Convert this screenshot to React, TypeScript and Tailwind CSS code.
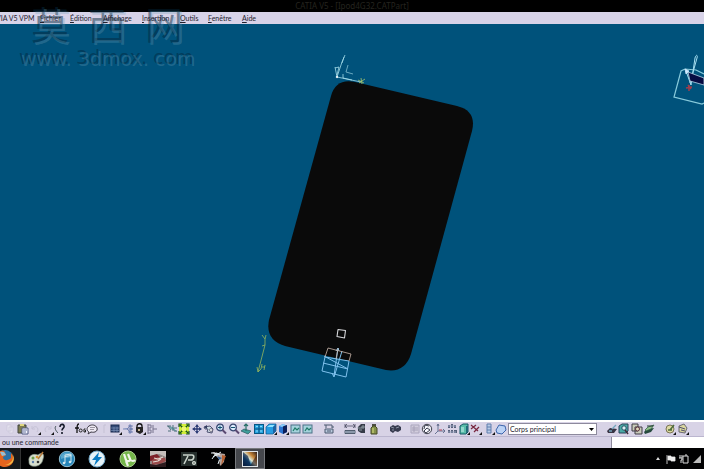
import type { ReactNode } from "react";

const menus = [
  { key: "F", rest: "ichier", width: "w-[30px]" },
  { key: "É", rest: "dition", width: "w-[33px]" },
  { key: "A", rest: "ffichage", width: "w-[39px]" },
  { key: "I", rest: "nsertion", width: "w-[38px]" },
  { key: "O", rest: "utils", width: "w-[28px]" },
  { key: "F", rest: "enêtre", width: "w-[34px]" },
  { key: "A", rest: "ide", width: "w-[30px]" },
];

const corner = <path d="M9 12h3V9z" fill="#111" />;

const magnifier = (
  <>
    <circle cx="5" cy="4.5" r="3.3" fill="#dcecff" stroke="#36456f" strokeWidth="1.3" />
    <path d="M7.5 7l3.5 3.5" stroke="#5b4a72" strokeWidth="2" />
  </>
);

const window_ = (
  <>
    <rect x="1" y="2" width="9" height="8" fill="#a5d2dc" stroke="#4b7387" />
    <path d="M3 8l2-3 2 2 2-2" stroke="#207b68" strokeWidth="1.2" fill="none" />
  </>
);

const icons: Record<string, ReactNode> = {
  Copier: <path d="M3 2h4v6H3zM5 4h4v6H5z" stroke="#cbc7da" fill="#e4e1ef" strokeWidth=".7" />,
  Coller: (
    <>
      <path d="M1 2h8v8H1z" fill="#7e7d52" stroke="#41443f" />
      <path d="M3 1h4v2H3z" fill="#ded681" />
      <path d="M5 5h6v6H5z" fill="#f4f4ff" stroke="#505a83" />
      <path d="M6 7h4M6 9h3" stroke="#6b78a0" />
    </>
  ),
  Annuler: <><path d="M3 3v3h3M3 6c3-5 8-1 5 3" stroke="#c6c2d6" fill="none" />{corner}</>,
  Rétablir: <><path d="M9 3v3H6M9 6C6 1 1 5 4 9" stroke="#c6c2d6" fill="none" />{corner}</>,
  Aide: (
    <>
      <path d="M2 3c-2 2 0 5 2 7" stroke="#3e4a50" fill="none" />
      <path d="M6 4c0-4 5-3 4 0-.5 1.5-2 1.5-2 3.500M8 9v2" stroke="#151a29" strokeWidth="1.6" fill="none" />
    </>
  ),
  Formule: (
    <>
      <path d="M5 1C3 1 3 3 3 10M1 5h4" stroke="#111" strokeWidth="1.3" fill="none" />
      <circle cx="6.700" cy="7.500" r="1.500" stroke="#222" fill="none" />
      <path d="M11.500 6H10v3h1.500V7" stroke="#222" fill="none" />
    </>
  ),
  Commentaire: (
    <>
      <path d="M3 9l-1 2 3-2c4 1 7-1 6-4S6 1 3 3 1 8 3 9z" fill="#eee9f3" stroke="#37343f" />
      <path d="M4 4.500h5M4 6.500h4" stroke="#74707b" strokeWidth=".7" />
    </>
  ),
  Vérifier: <path d="M6 2v8M8 2H6" stroke="#c5c1d4" fill="none" />,
  Table: (
    <>
      <rect x="1" y="2" width="8" height="7" fill="#344b78" stroke="#192a4e" />
      <path d="M1 5h8M1 7.500h8M4 4v5M7 4v5" stroke="#8096b9" strokeWidth=".6" />
      {corner}
    </>
  ),
  Arbre: (
    <path d="M1 6h4l3-3h3M5 6h6M5 6l3 3h3M7 2h2v2H7zM8 5h2v2H8zM7 8h2v2H7z" stroke="#6b7aab" strokeWidth=".8" fill="#9eadd4" />
  ),
  Verrou: (
    <>
      <path d="M3 5V3c0-3 5-3 5 0v2" stroke="#111" strokeWidth="1.300" fill="none" />
      <path d="M2 4h7v5l-3 2-4-2z" fill="#252323" />
      <path d="M4 6h2v2H4z" fill="#c6b693" />
      {corner}
    </>
  ),
  Structure: (
    <path d="M2 1v10M2 2h3v3H2M2 7h3v3H2M7 2v8M7 6h4" stroke="#77738d" fill="none" />
  ),
  Survol: (
    <>
      <path d="M2 3l5 1 4 5-6-3z" fill="#6fa3aa" />
      <path d="M1 3h4M2 3l3 4M2 8h3M7 2v6M8 5h3M8 8h3" stroke="#42656f" strokeWidth=".9" fill="none" />
    </>
  ),
  "Tout centrer": (
    <>
      <rect x="1" y="1" width="10" height="10" fill="#d0ee38" />
      <path d="M1 4V1h3M8 1h3v3M11 8v3H8M4 11H1V8M2 2l8 8M10 2l-8 8" stroke="#15511d" strokeWidth="1.200" fill="none" />
      <path d="M4 4h4v4H4z" fill="#edf574" />
    </>
  ),
  Translation: (
    <>
      <path d="M6 2v8M2 6h8" stroke="#2c3b74" strokeWidth="1.300" />
      <path d="M6 1l2 3H4zM6 11l2-3H4zM1 6l3-2v4zM11 6L8 4v4z" fill="#2c3b74" />
    </>
  ),
  Rotation: (
    <>
      <path d="M1 4l6-1 3 3-1 4-5-1 1-3H2z" fill="#cbd9e4" stroke="#4f5272" />
      <path d="M1 4l3-2v4z" fill="#333c62" />
      <circle cx="8" cy="7" r="1.500" fill="#fff" stroke="#585265" strokeWidth=".7" />
    </>
  ),
  "Zoom avant": <>{magnifier}<path d="M3 4.500h4M5 2.500v4" stroke="#13516d" /></>,
  "Zoom arrière": <>{magnifier}<path d="M3 4.500h4" stroke="#13516d" /></>,
  "Vue normale": (
    <>
      <path d="M1 8l3-2 7 2-3 3z" fill="#3e9d9a" stroke="#28575f" strokeWidth=".7" />
      <path d="M6 1v7M4 3l2-2 2 2" stroke="#286f68" strokeWidth="1.200" fill="none" />
    </>
  ),
  "Vues multiples": (
    <>
      <rect x="1.500" y="1.500" width="9" height="9" fill="#26a4e2" stroke="#075884" />
      <path d="M6 2v8M2 6h8" stroke="#064f7c" />
      <path d="M3 3.500h2M7 3.500h2M3 8h2M7 8h2" stroke="#8ddbf6" />
    </>
  ),
  "Vue isométrique": (
    <>
      <path d="M1 4l3-3h7v7l-3 3H1z" fill="#269ce2" stroke="#0e5c91" strokeWidth=".7" />
      <path d="M2 4l3-2h5L8 4z" fill="#8fe3ff" />
      <path d="M8 4l3-3v7l-3 3z" fill="#1d63a4" />
      {corner}
    </>
  ),
  Ombrage: (
    <>
      <path d="M2 3l4-2 4 2v6l-4 2-4-2z" fill="#2b73d0" />
      <path d="M6 3l4-1v7l-4 2z" fill="#0b1e5a" />
      <path d="M2 3l4-2 3 1-4 2z" fill="#8cccf8" />
      {corner}
    </>
  ),
  "Cacher/Afficher": window_,
  "Espace visible": window_,
  Imprimer: (
    <>
      <path d="M2 6h8v4H2z" fill="#b9c8dc" stroke="#4d5a70" />
      <path d="M3 5V2h6v3M4 8h4M1 2h2M9 4h2" stroke="#4d5a70" fill="none" />
    </>
  ),
  "Mesurer entre": (
    <>
      <path d="M1 1v4M11 1v4M1 3h10M3 1L1 3l2 2M9 1l2 2-2 2" stroke="#4b4d62" strokeWidth=".8" fill="none" />
      <path d="M1 7.500h10v3H1z" fill="#bbc8da" stroke="#334152" strokeWidth=".8" />
      <path d="M3 8v2M5 8v2M7 8v2M9 8v2" stroke="#334152" strokeWidth=".7" />
    </>
  ),
  "Mesurer un élément": (
    <>
      <path d="M2 4l3-3h4v9H5L2 8z" fill="#353b48" />
      <path d="M1 5h5M3 7h3M6 3h2v2H6z" stroke="#a1adb5" strokeWidth=".8" fill="none" />
    </>
  ),
  "Mesurer l'inertie": (
    <>
      <path d="M4 1h4v3H4z" fill="#4c4e44" />
      <path d="M3 5l2-2h2l2 2v6H3z" fill="#83904b" stroke="#464b26" />
      <path d="M5 5v5" stroke="#dbe081" />
    </>
  ),
  Catalogue: (
    <>
      <path d="M1 4l3-2 2 1 3-1 3 2v3l-3 2-3-1-2 2-3-2z" fill="#373b4f" />
      <path d="M2 4l3 1M7 5l3-1M4 6v2" stroke="#b0b7c8" strokeWidth=".7" />
    </>
  ),
  Sélection: <><path d="M2 2h8v8H2z" fill="#d1ccdc" stroke="#aaa6bd" /><path d="M3 5h6M3 7h6M5 3v6" stroke="#a6a1b8" /></>,
  "Mise à jour": (
    <>
      <circle cx="6" cy="6" r="4.700" fill="#ecebf2" stroke="#40424e" />
      <path d="M3 6l1-4 4 1M6 5l3 2-4 3-2-2z" stroke="#3c4050" fill="#f9f9ff" />
    </>
  ),
  Repère: (
    <>
      <path d="M4 1v7l-3 3M4 8h7M3 3l1-2 1 2M9 6l2 2-2 2" stroke="#5e698a" strokeWidth=".9" fill="none" />
      <path d="M5 7h3" stroke="#bb4352" />
    </>
  ),
  Grille: (
    <>
      <path d="M2 2h2v3H2zM5 1h2v4H5zM8 2h2v3H8zM2 7h2v3H2zM5 7h2v3H5zM8 7h3v3H8z" fill="#56607b" />
      <path d="M2 3h8M2 9h8" stroke="#9aa5bf" />
    </>
  ),
  Volume: (
    <>
      <path d="M2 3l3-2h5v8l-2 2H2z" fill="#59bda9" stroke="#155765" />
      <path d="M8 3h2v6l-2 2z" fill="#226b79" />
      <path d="M3 4h3v5H3z" fill="#93d8cc" />
      {corner}
    </>
  ),
  Contrainte: <><path d="M1 2l7 6M1 6l5-4M4 9l5-5" stroke="#79273f" strokeWidth="1.200" />{corner}</>,
  Analyse: <><path d="M4 1h4v9H4zM4 4h4M4 7h4" stroke="#607eae" fill="#b9cbe7" />{corner}</>,
  Surface: <path d="M1 7l3-5 6 1 1 4-4 4-5-1z" fill="#bbd2f5" stroke="#3c65ac" />,
  Esquisse: (
    <>
      <path d="M1 8l3-3 7 1-3 4H2z" fill="#383444" />
      <path d="M6 6l4-4M3 8h3" stroke="#73a4bc" strokeWidth="1.300" />
    </>
  ),
  Recherche: (
    <>
      <path d="M1 10V3l3-2h6v7l-2 2z" fill="#4aaba5" stroke="#29435b" />
      <circle cx="6" cy="5" r="2.200" fill="#daeff1" stroke="#234d66" />
      <path d="M7 7l3 4" stroke="#402d3b" strokeWidth="1.500" />
    </>
  ),
  Dupliquer: (
    <>
      <path d="M1 1h6v7H1zM4 4h7v7H4z" fill="#c8cab9" stroke="#3e3c46" />
      <circle cx="6.500" cy="6" r="2" fill="#ded9bb" stroke="#5d3340" />
    </>
  ),
  Calques: (
    <>
      <path d="M1 9l3-3 7-1-3 4-6 2z" fill="#25493e" />
      <path d="M2 7l3-3 6-2-3 4-5 2z" fill="#8fbf88" stroke="#28543c" strokeWidth=".7" />
      <path d="M4 3h6" stroke="#283d37" />
    </>
  ),
  Matériau: (
    <>
      <circle cx="6" cy="6" r="4" fill="#ded9a4" stroke="#787453" />
      <path d="M6 7l4-5M4 7h4" stroke="#4d6c3a" strokeWidth="1.500" />
      {corner}
    </>
  ),
  Rendu: (
    <>
      <path d="M2 3l5-2 3 4-2 5-6-1z" fill="#d9d69e" stroke="#6b6a74" />
      <path d="M2 4l6 2M4 7l4 1" stroke="#52506a" />
      {corner}
    </>
  ),
};

const groups = [
  { names: ["Copier", "Coller", "Annuler", "Rétablir", "Aide"], className: "ml-1 w-[62px]" },
  { names: ["Formule", "Commentaire", "Vérifier", "Table", "Arbre", "Verrou", "Structure"], className: "ml-2 w-[84px]" },
  {
    names: ["Survol", "Tout centrer", "Translation", "Rotation", "Zoom avant", "Zoom arrière", "Vue normale", "Vues multiples", "Vue isométrique", "Ombrage", "Cacher/Afficher", "Espace visible"],
    className: "ml-2 w-[148px]",
  },
  { names: ["Imprimer"], className: "ml-[9px] w-3" },
  { names: ["Mesurer entre", "Mesurer un élément", "Mesurer l'inertie"], className: "ml-[9px] w-9" },
  { names: ["Catalogue"], className: "ml-[9px] w-3" },
  { names: ["Sélection", "Mise à jour", "Repère", "Grille", "Volume", "Contrainte", "Analyse", "Surface"], className: "ml-2 w-[98px]" },
];

const endGroups = [
  { names: ["Esquisse", "Recherche", "Dupliquer", "Calques"], className: "ml-[9px] w-[49px]" },
  { names: ["Matériau", "Rendu"], className: "ml-[9px] w-[25px]" },
];

function ToolGroup({ names, className }: { names: string[]; className: string }) {
  return (
    <div className={`flex shrink-0 justify-between ${className}`}>
      {names.map((name) => (
        <button key={name} aria-label={name} className="size-3 shrink-0">
          <svg viewBox="0 0 12 12" className="size-3">{icons[name]}</svg>
        </button>
      ))}
    </div>
  );
}

const apps: { name: string; art: ReactNode }[] = [
  {
    name: "Paint",
    art: (
      <>
        <path d="M2 11C1 6 6 3 11 5c4-3 7-1 5 4-1 6-6 8-11 7-3-1-3-3-3-5z" fill="#d7ddcc" stroke="#819085" strokeWidth=".7" />
        <circle cx="6" cy="8" r="1.500" fill="#6a9e4b" /><circle cx="10" cy="7" r="1.300" fill="#d69b36" />
        <circle cx="6" cy="12" r="1.200" fill="#597ba9" /><circle cx="11" cy="12" r="1.300" fill="#333" />
        <path d="M11 9l5-7" stroke="#b7793c" strokeWidth="1.500" />
      </>
    ),
  },
  {
    name: "iTunes",
    art: (
      <>
        <circle cx="9" cy="9" r="7.700" fill="#2685b9" stroke="#91bfd3" />
        <path d="M3 6a7 7 0 0112 0c-4 3-8 1-12 3z" fill="#79c0dc" opacity=".6" />
        <path d="M7 13V5l6-1v8M7 6.500l6-1" stroke="#d2e8f0" strokeWidth="1" fill="none" />
        <circle cx="6" cy="13" r="1.300" fill="#d2e8f0" /><circle cx="12" cy="12" r="1.300" fill="#d2e8f0" />
      </>
    ),
  },
  {
    name: "DAEMON Tools",
    art: (
      <>
        <circle cx="9" cy="9" r="8" fill="#e5f2f8" stroke="#6ca5c7" />
        <path d="M11 2L4 10h4l-2 6 8-9h-4z" fill="#087ac3" />
      </>
    ),
  },
  {
    name: "µTorrent",
    art: (
      <>
        <circle cx="9" cy="9" r="8" fill="#75b64a" stroke="#aacb8e" />
        <path d="M5 4l2 6c1 2 5 1 4-1L9 4M11 9c1 3 4 2 5 1M7 11l2 5" stroke="#f1f5e9" strokeWidth="2.200" fill="none" />
      </>
    ),
  },
  {
    name: "Jeu",
    art: (
      <>
        <rect x="1" y="1" width="16" height="16" fill="#8f8583" />
        <path d="M1 1h16v6l-7-3-9 2z" fill="#c5bebb" />
        <path d="M1 6l7-2 3 3-4 3-6 1z" fill="#7d2129" />
        <path d="M3 10l6-3 7 1 1 3-6 3-8 1z" fill="#9a4a4a" />
        <path d="M5 8l4 1 5-2M4 12l5-1 3-2" stroke="#e3d9d2" strokeWidth="1.200" fill="none" />
        <path d="M1 14l6 1 10-3v5H1z" fill="#2c1a1d" />
      </>
    ),
  },
  {
    name: "Éditeur",
    art: (
      <>
        <rect x="1" y="2" width="16" height="14" fill="#252e2c" />
        <path d="M3 5h9c3 0 2 5-1 5H8M8 6l-4 8" stroke="#c9d2ca" strokeWidth="1.600" fill="none" />
        <circle cx="14" cy="13" r="2" fill="#dde4dc" /><circle cx="14" cy="13" r=".7" fill="#27332d" />
      </>
    ),
  },
  {
    name: "Modeleur",
    art: (
      <>
        <path d="M2 2l13 2-1 8-4 4-1-7z" fill="#b4a39c" />
        <path d="M12 5l4 1-5 10 1-6z" fill="#b96131" />
        <path d="M1 3h4l3 4M2 9l4-6 4 2M3 7l8-5M10 8l-2 6" stroke="#e1edf2" strokeWidth="1" fill="none" />
        <path d="M7 6l5 2-3 2z" fill="#355d91" />
      </>
    ),
  },
  {
    name: "CATIA V5",
    art: (
      <>
        <defs>
          <linearGradient id="catia" x1="0" y1="1" x2="1" y2="0">
            <stop stopColor="#090f28" /><stop offset=".35" stopColor="#176ba0" />
            <stop offset=".5" stopColor="#d9e2d0" /><stop offset=".68" stopColor="#c58335" /><stop offset="1" stopColor="#170e15" />
          </linearGradient>
        </defs>
        <rect x="1.500" y="1.500" width="15" height="15" fill="url(#catia)" stroke="#dfe4e7" />
        <path d="M2 2l5 4 3 10H2z" fill="#07183c" opacity=".65" />
        <path d="M9 16l7-12v12z" fill="#291612" opacity=".6" />
      </>
    ),
  },
];

function Scene() {
  return (
    <svg viewBox="0 24 704 396" className="block w-full" role="img" aria-label="Modèle 3D">
      <path d="M331 96Q336 78 355 82L457 106Q477 111 472 131L411 354Q405 373 386 370L285 346Q265 340 269 320Z" fill="#0a0a0a" />
      <g fill="none" strokeWidth=".8">
        <path d="M337 77l5-15 3-7M342 63l2-6M335 67l2 10 24 5M335 68l4-1-2 8M343 74v4l9 2" stroke="#a4ddea" />
        <path d="M348 65l-2 7 7 2" stroke="#82becf" />
        <path d="M358 80l6 3M359 83l6-4M361 78l1 6" stroke="#a8c66c" />
        <circle cx="337" cy="77" r=".8" fill="#fff" stroke="#fff" />
        <path d="M338 329.500l7.500 1-1 7.500-7.500-1.500z" stroke="#d8d9dc" strokeWidth="1.100" strokeLinejoin="round" />
        <path d="M262 335l3 4 1-4M265 339v6l-7 27M262 346l3-1M257 367l1 5 3-3M261 369l1-5M262 367h3M264 370l1-5" stroke="#94b65d" />
        <g stroke="#7fc1ed" strokeWidth="1">
          <path d="M325 357l-3 14 24 6 3-16M324 356l24 13M323 363l25 6M325 357l24 4M338 348l-4 28M342 351l-7 23" />
          <path d="M336 351l2-3 1 3M332 373l2 4 1-4" />
        </g>
        <path d="M325 357l3-9 23 6-2 7M338 348l-2 11" stroke="#cbb8ac" />
        <path d="M704 74l-8-4-11-1-4 2-7 26 28 7 2-1" stroke="#88cbdc" strokeWidth="1.200" />
        <path d="M686 71l5 14 4-27c1-4 3-3 2 0l-7 25" stroke="#a6dff1" strokeWidth="1" />
        <path d="M688 72l16 6v7l-14-4z" fill="#070b42" stroke="#b7d7e7" />
        <path d="M685 69l4 2-3 3z" fill="#d0eaff" stroke="#d0eaff" />
        <path d="M689 85v6M686 88l6-1M688 85l3 4" stroke="#9e3e4d" strokeWidth="1.500" />
      </g>
    </svg>
  );
}

export default function App() {
  return (
    <div className="relative w-full bg-black font-[Lato,sans-serif] text-[7px] leading-3 text-[#24212d]">
      <header>
        <h1 className="h-3 text-center font-['Noto_Sans',sans-serif] text-[8px] leading-3 text-[#25241f]">CATIA V5 - [Ipod4G32.CATPart]</h1>
        <nav className="flex h-3 bg-[#d8d3e8] whitespace-nowrap">
          <button className="relative z-10 -ml-1 w-11 text-left">VIA V5 VPM</button>
          {menus.map(({ key, rest, width }) => (
            <button key={key + rest} className={`relative z-10 text-left ${width}`}>
              <span className="underline">{key}</span>{rest}
            </button>
          ))}
        </nav>
      </header>

      <main className="bg-[#00527b]"><Scene /></main>

      <div className="pointer-events-none absolute top-[2px] left-5 text-transparent [text-shadow:1px_1px_0_#6fa0b84d,-1px_-1px_0_#04283f80]">
        <div className="flex gap-[19px] pl-3 font-['Noto_Sans_CJK_SC',sans-serif] text-[38px] leading-[44px]">
          <span>莫</span><span>西</span><span>网</span>
        </div>
        <div className="font-['DejaVu_Sans',sans-serif] text-[19px] leading-6">www. 3dmox. com</div>
      </div>

      <footer>
        <div className="flex h-4 items-center border-t-2 border-white bg-[#d8d3e6]">
          {groups.map((group) => <ToolGroup key={group.names[0]} {...group} />)}
          <div className="relative ml-px w-[89px] shrink-0">
            <select aria-label="Corps actif" className="block h-3 w-full appearance-none border border-[#8d8a9d] bg-white px-px text-[7px] leading-[10px]">
              <option>Corps principal</option>
            </select>
            <svg viewBox="0 0 5 3" className="pointer-events-none absolute top-[5px] right-[3px] h-[3px] w-[5px]"><path d="M0 0h5L2.500 3z" /></svg>
          </div>
          {endGroups.map((group) => <ToolGroup key={group.names[0]} {...group} />)}
        </div>
        <div className="flex h-3 border-t border-[#bbb6cf] bg-[#d5d0e5]">
          <p className="flex-1 pl-[2px] leading-[11px]">ou une commande</p>
          <input aria-label="Commande" className="w-[93px] border-l border-[#8d8a9d] bg-white px-1 outline-none" />
        </div>
        <div className="flex h-[21px] items-center bg-[#010102]">
          <button aria-label="Firefox" className="h-full w-[21px] border-r border-[#333] bg-[#17191b]">
            <svg viewBox="0 0 20 21" className="h-[21px] w-5">
              <circle cx="5" cy="10" r="8" fill="#2a70a5" />
              <path d="M0 3c5-2 5 2 6 4l-3 2c0 4 5 4 8 1V5c6 7 1 14-6 14-3 0-5-1-7-3v-6z" fill="#e5641d" />
              <path d="M12 5c3 6-1 11-7 12 8 1 11-6 7-12z" fill="#f3bf48" />
              <path d="M0 4c3-1 5 0 6 3l-4 1z" fill="#95bfd5" />
            </svg>
          </button>
          <div className="grid h-full w-[244px] grid-cols-8">
            {apps.map(({ name, art }) => (
              <button key={name} aria-label={name} className={`flex items-center justify-center ${name === "CATIA V5" ? "border border-[#77797d] bg-[#45474c]" : ""}`}>
                <svg viewBox="0 0 18 18" className="size-[18px]">{art}</svg>
              </button>
            ))}
          </div>
          <div className="ml-auto flex items-center gap-[3px] pr-[2px]">
            <button aria-label="Icônes cachées"><svg viewBox="0 0 10 10" className="size-[10px]"><path d="M3 6l2-3 2 3z" fill="#ddd" /></svg></button>
            <button aria-label="Notifications"><svg viewBox="0 0 10 10" className="size-[10px]"><path d="M1 1v9M2 2h3v1h4v4H5V6H2z" fill="#eee" stroke="#eee" strokeWidth=".8" /></svg></button>
            <button aria-label="Batterie"><svg viewBox="0 0 10 10" className="size-[10px]"><path d="M4 2h5v7H4zM6 1h2M1 1v3M3 1v3M0 4h3v2H2v3" fill="none" stroke="#ddd" /></svg></button>
            <button aria-label="Réseau"><svg viewBox="0 0 10 10" className="size-[10px]"><path d="M1 9L9 1v8z" fill="#bbb" /></svg></button>
          </div>
        </div>
      </footer>
    </div>
  );
}
